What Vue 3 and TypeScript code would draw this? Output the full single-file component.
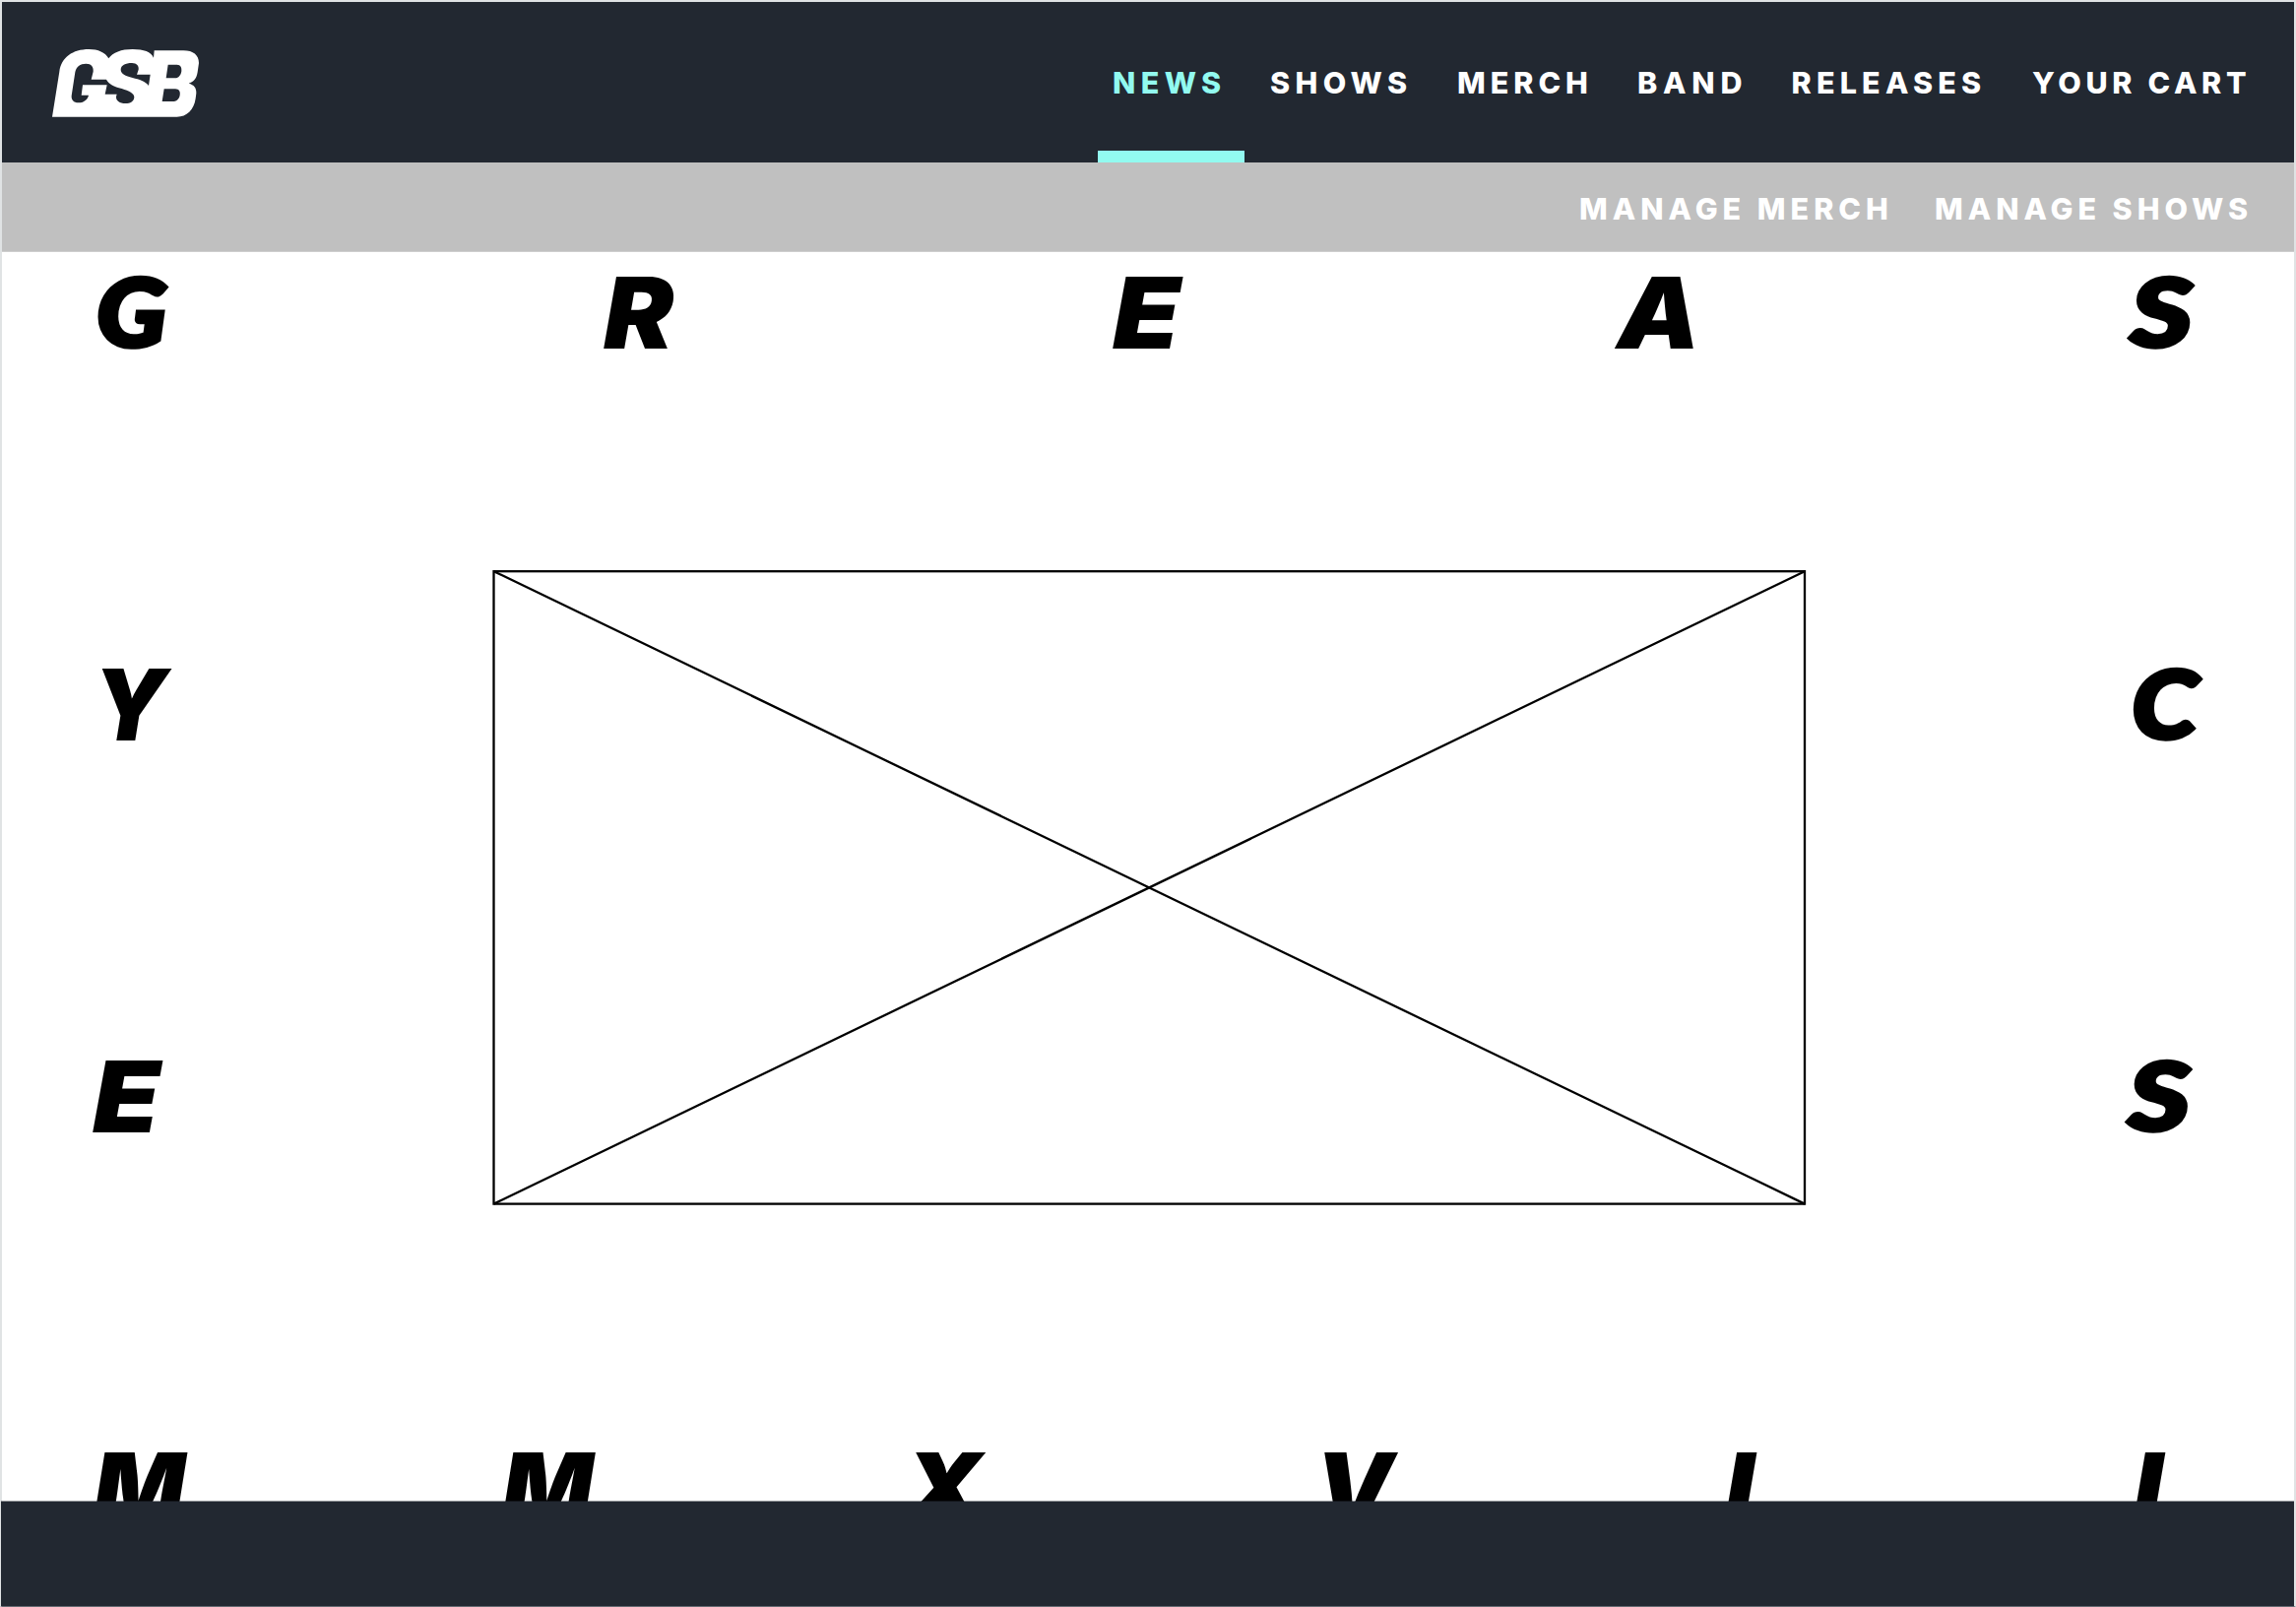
<script setup lang="ts">
interface NavItem {
  label: string
  width: number
  active?: boolean
}

interface Glyph {
  char: string
  left: number
  right: number
  baseline: number
  round?: boolean
}

const navFont = '800 30.5px Inter, "Open Sans", sans-serif'
const straightFont = 'italic 900 100px Inter, "Open Sans", sans-serif'
const roundFont = 'italic 900 94.5px Lato, Inter, sans-serif'

// Outline that thickens the round letters to the weight of the straight ones.
const roundStroke = 5

const mainNav: NavItem[] = [
  { label: 'NEWS', width: 109, active: true },
  { label: 'SHOWS', width: 138 },
  { label: 'MERCH', width: 131 },
  { label: 'BAND', width: 104.5 },
  { label: 'RELEASES', width: 191.5 },
  { label: 'YOUR CART', width: 217 },
]

const adminNav: NavItem[] = [
  { label: 'MANAGE MERCH', width: 312 },
  { label: 'MANAGE SHOWS', width: 317 },
]

// Lettering that runs around the edge of the hero, in hero coordinates.
const glyphs: Glyph[] = [
  { char: 'G', left: 97, right: 169.4, baseline: 99, round: true },
  { char: 'R', left: 611, right: 685.5, baseline: 99 },
  { char: 'E', left: 1128, right: 1200, baseline: 99 },
  { char: 'A', left: 1637, right: 1718, baseline: 99 },
  { char: 'S', left: 2158.3, right: 2227, baseline: 99, round: true },
  { char: 'Y', left: 101, right: 172.7, baseline: 497 },
  { char: 'C', left: 2164.3, right: 2235, baseline: 497, round: true },
  { char: 'E', left: 92, right: 163.8, baseline: 895 },
  { char: 'S', left: 2156, right: 2224.5, baseline: 895, round: true },
  { char: 'M', left: 92.5, right: 189, baseline: 1292.5 },
  { char: 'M', left: 507.5, right: 603.4, baseline: 1292.5 },
  { char: 'X', left: 912, right: 1000.5, baseline: 1292.5 },
  { char: 'V', left: 1342.6, right: 1418.4, baseline: 1292.5 },
  { char: 'I', left: 1749.5, right: 1782.5, baseline: 1292.5 },
  { char: 'I', left: 2164.2, right: 2197.4, baseline: 1292.5 },
]

const ctx = document.createElement('canvas').getContext('2d')!

function ink(text: string, font: string) {
  ctx.font = font
  const m = ctx.measureText(text)
  return { start: -m.actualBoundingBoxLeft, end: m.actualBoundingBoxRight }
}

// Tracks a label so its ink fills the width of its nav item.
function tracking(item: NavItem) {
  const box = ink(item.label, navFont)
  const spacing = (item.width - (box.end - box.start)) / (item.label.length - 1)
  return { letterSpacing: `${spacing.toFixed(2)}px`, marginLeft: `${(-box.start).toFixed(2)}px` }
}

function place(g: Glyph) {
  const inset = g.round ? roundStroke / 2 : 0
  const box = ink(g.char, g.round ? roundFont : straightFont)
  const scale = (g.right - g.left - inset * 2) / (box.end - box.start)
  return `translate(${g.left + inset - box.start * scale} ${g.baseline - inset}) scale(${scale} 1)`
}
</script>

<template>
  <div class="page">
    <header class="header">
      <svg class="logo" viewBox="160 150 450 207" role="img" aria-label="GSB">
        <path
          fill-rule="evenodd"
          d="M160 356 L182 218 C188 175 222 150 272 150 C300 150 322 160 332 178 C345 160 370 150 405 150 C440 150 461 158 469 176 L471 154 L560 154 C590 154 607 168 607 192 L603 220 C600 240 590 250 576 254 C592 258 600 268 599 284 L597 300 C592 335 570 356 540 356 Z
          M263 194 C280 194 286 204 285 218 L279 242 L325 242 C333 256 348 264 372 270 C395 277 410 285 410 296 C409 308 399 315 383 315 C365 315 354 307 355 294 L357 287 L321 287 L327 259 L253 259 L249 290 L271 290 C268 304 255 313 240 313 C225 313 218 305 219 292 L230 220 C233 203 245 194 263 194 Z
          M403 192 C418 192 425 202 423 212 L418 227 L459 227 L454 261 C445 248 425 242 405 237 C383 231 369 225 369 212 C369 199 383 192 403 192 Z
          M513 197 L540 197 C552 197 555 206 554 217 C552 230 545 238 535 238 L507 238 Z
          M501 271 L535 271 C547 271 551 280 549 290 C547 302 538 309 527 309 L495 309 Z"
        />
      </svg>
      <nav class="nav">
        <a
          v-for="item in mainNav"
          :key="item.label"
          class="link"
          :class="{ active: item.active }"
          :style="{ width: `${item.width}px` }"
        ><span :style="tracking(item)">{{ item.label }}</span></a>
      </nav>
    </header>

    <nav class="admin">
      <a
        v-for="item in adminNav"
        :key="item.label"
        class="link"
        :style="{ width: `${item.width}px` }"
      ><span :style="tracking(item)">{{ item.label }}</span></a>
    </nav>

    <main class="hero">
      <svg class="art" viewBox="0 0 2328 1270">
        <g class="frame">
          <rect x="499.5" y="325.2" width="1331.5" height="642.4" />
          <path d="M499.5 325.2 L1831 967.6 M1831 325.2 L499.5 967.6" />
        </g>
        <text
          v-for="(g, i) in glyphs"
          :key="i"
          class="glyph"
          :class="{ round: g.round }"
          :transform="place(g)"
        >{{ g.char }}</text>
      </svg>
    </main>

    <footer class="footer"></footer>
  </div>
</template>

<style>
body {
  background: #fff;
  overflow: hidden;
}
</style>

<style scoped>
.page {
  box-sizing: border-box;
  width: 2332px;
  height: 1632px;
  display: flex;
  flex-direction: column;
  border: 2px solid #e0e3e4;
  border-bottom: 1px solid #656a72;
  background: #fff;
  font-family: Inter, "Open Sans", sans-serif;
}

.header {
  flex: none;
  height: 163px;
  display: flex;
  justify-content: space-between;
  padding: 0 49px 0 51px;
  background: #222831;
}

.logo {
  width: 150px;
  height: 69px;
  margin-top: 48px;
  fill: #fff;
}

.nav {
  display: flex;
  gap: 52px;
}

.link {
  position: relative;
  display: flex;
  align-items: center;
  font-size: 30.5px;
  font-weight: 800;
  line-height: 36px;
  white-space: nowrap;
  color: #fff;
}

.nav .link {
  height: 163px;
}

.active {
  color: #92faf0;
  left: 1px;
}

.active::after {
  content: "";
  position: absolute;
  left: -16.5px;
  right: -23.5px;
  bottom: 0;
  height: 12px;
  background: #92faf0;
}

.admin {
  flex: none;
  box-sizing: border-box;
  height: 91px;
  display: flex;
  justify-content: flex-end;
  gap: 49px;
  padding: 4px 47px 0 0;
  border-bottom: 1px solid #cecece;
  background: #c0c0c0;
}

.hero {
  flex: none;
  height: 1269px;
  overflow: hidden;
}

.art {
  display: block;
  width: 2328px;
  height: 1270px;
  margin-top: -1px;
}

.frame {
  fill: none;
  stroke: #000;
  stroke-width: 2.3;
}

.glyph {
  font-family: Inter, "Open Sans", sans-serif;
  font-size: 100px;
  font-style: italic;
  font-weight: 900;
  fill: #000;
}

.glyph.round {
  font-family: Lato, Inter, sans-serif;
  font-size: 94.5px;
  stroke: #000;
  stroke-width: 5;
  stroke-linejoin: miter;
  vector-effect: non-scaling-stroke;
}

.footer {
  position: relative;
  flex: 1;
  margin-top: -1px;
  margin-left: -1px;
  border-top: 1px solid rgba(34, 40, 49, 0.5);
  background: #222831;
  background-clip: padding-box;
}
</style>
